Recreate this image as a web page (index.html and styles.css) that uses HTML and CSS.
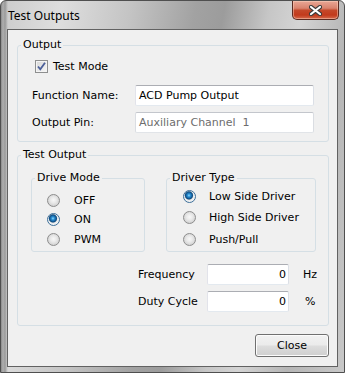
FILE: index.html
```html
<!DOCTYPE html>
<html lang="en">
<head>
    <meta charset="UTF-8">
    <title>Test Outputs</title>
<link rel="stylesheet" href="styles.css">
</head>
<body>
    <div class="window">
        <div class="titlebar">
            <span class="title">Test Outputs</span>
            <button class="close-x" aria-label="Close">
                <svg width="13" height="11" viewBox="0 0 13 11">
                    <path d="M2 2 L11 9 M11 2 L2 9" stroke="#3b3b3b" stroke-width="4.2" stroke-linecap="round"/>
                    <path d="M2 2 L11 9 M11 2 L2 9" stroke="#ffffff" stroke-width="2.2" stroke-linecap="round"/>
                </svg>
            </button>
        </div>

        <div class="client">
            <fieldset class="group output-group">
                <legend>Output</legend>
                <label class="check-row">
                    <span class="checkbox checked">
                        <svg width="11" height="11" viewBox="0 0 11 11">
                            <path d="M2 5.5 L4.3 8.3 L9 1.8" fill="none" stroke="#4b5f99" stroke-width="1.8"/>
                        </svg>
                    </span>
                    Test Mode
                </label>
                <div class="field-row">
                    <span class="field-label">Function Name:</span>
                    <div class="textbox">ACD Pump Output</div>
                </div>
                <div class="field-row pin-row">
                    <span class="field-label">Output Pin:</span>
                    <div class="textbox disabled">Auxiliary Channel  1</div>
                </div>
            </fieldset>

            <fieldset class="group test-group">
                <legend>Test Output</legend>
                <div class="subgroups">
                    <fieldset class="group drive-mode">
                        <legend>Drive Mode</legend>
                        <div class="radio-row"><span class="radio"></span>OFF</div>
                        <div class="radio-row"><span class="radio checked"></span>ON</div>
                        <div class="radio-row"><span class="radio"></span>PWM</div>
                    </fieldset>
                    <fieldset class="group driver-type">
                        <legend>Driver Type</legend>
                        <div class="radio-row"><span class="radio checked"></span>Low Side Driver</div>
                        <div class="radio-row"><span class="radio"></span>High Side Driver</div>
                        <div class="radio-row"><span class="radio"></span>Push/Pull</div>
                    </fieldset>
                </div>
                <div class="value-row">
                    <span class="value-label">Frequency</span>
                    <div class="textbox number">0</div>
                    <span class="unit">Hz</span>
                </div>
                <div class="value-row duty-row">
                    <span class="value-label">Duty Cycle</span>
                    <div class="textbox number">0</div>
                    <span class="unit percent">%</span>
                </div>
            </fieldset>

            <div class="buttons">
                <button class="btn">Close</button>
            </div>
        </div>
    </div>
</body>
</html>
```

FILE: styles.css
```css
:root {
    --face: #f0f0f0;
    --group-border: #d5dfe5;
    --text: #000;
}

* {
    box-sizing: border-box;
}

body {
    margin: 0;
    font-family: "DejaVu Sans", Tahoma, sans-serif;
    font-size: 11px;
    color: var(--text);
    background: #fff;
}

.window {
    width: 345px;
    height: 373px;
    border: 1px solid #4f4f4f;
    border-radius: 6px 6px 0 0;
    padding: 0 6px 5px 6px;
    background:
        linear-gradient(90deg, #8a8a8a 0, #b0b0b0 2px, #9a9a9a 4px, transparent 7px),
        linear-gradient(100deg, #cbcbcb 0%, #dedede 15%, #c4c4c4 32%, #a2a2a2 48%, #9c9c9c 55%, #c6c6c6 66%, #d4d4d4 74%, #b6b6b6 86%, #c8c8c8 100%);
    display: flex;
    flex-direction: column;
}

.titlebar {
    height: 28px;
    display: flex;
    align-items: flex-start;
    justify-content: space-between;
}

.title {
    font-family: "Noto Sans", "DejaVu Sans", sans-serif;
    font-size: 12px;
    line-height: 16px;
    padding: 7px 0 0 1px;
    color: #000;
}

.close-x {
    width: 47px;
    height: 19px;
    margin-right: -1px;
    border: 1px solid #5b2b22;
    border-top: none;
    border-radius: 0 0 5px 5px;
    background: linear-gradient(#e9a796 0%, #d9836e 40%, #c4482a 52%, #c23a1c 78%, #d56b4e 100%);
    box-shadow: inset 0 0 0 1px rgba(255, 220, 200, 0.45);
    padding: 0;
    display: flex;
    align-items: center;
    justify-content: center;
}

.client {
    flex: 1;
    background: var(--face);
    border: 1px solid #626262;
    display: flex;
    flex-direction: column;
}

.group {
    border: 1px solid var(--group-border);
    border-radius: 3px;
    margin: 0;
    padding: 0;
    min-width: 0;
}

.group > legend {
    padding: 0 2px;
    margin-left: 3px;
    line-height: 14px;
}

.output-group {
    margin: 8px 8px 0 9px;
    padding: 8px 0 8px 0;
}

.check-row {
    display: flex;
    align-items: center;
    height: 13px;
    padding-left: 17px;
    gap: 5px;
}

.checkbox {
    width: 13px;
    height: 13px;
    border: 1px solid #8e8f8f;
    background: linear-gradient(135deg, #d6d6d6, #f7f7f7);
    box-shadow: inset 0 0 0 1px #f4f4f4;
    display: flex;
    align-items: center;
    justify-content: center;
}

.field-row {
    display: flex;
    align-items: center;
    margin-top: 12px;
    padding-left: 14px;
}

.pin-row {
    margin-top: 6px;
}

.field-label {
    width: 103px;
}

.textbox {
    height: 21px;
    background: #fff;
    border: 1px solid;
    border-color: #abadb3 #dbdfe6 #e3e9ef #e2e3ea;
    border-radius: 2px;
    padding: 0 3px;
    line-height: 19px;
    white-space: pre;
}

.field-row .textbox {
    width: 179px;
}

.textbox.disabled {
    color: #6d6d6d;
    border-color: #c3c6cc #dadde2 #e1e4e8 #dadde2;
}

.test-group {
    margin: 6px 8px 0 9px;
    padding: 0 0 13px 0;
}

.subgroups {
    display: flex;
    margin-top: 9px;
    padding-left: 13px;
    gap: 21px;
}

.drive-mode {
    width: 114px;
    padding: 9px 0 5px 0;
}

.driver-type {
    width: 150px;
    padding: 5px 0 5px 0;
}

.radio-row {
    display: flex;
    align-items: center;
    height: 13px;
    margin-top: 6px;
}

.radio-row:first-of-type {
    margin-top: 0;
}

.drive-mode .radio-row {
    padding-left: 15px;
    gap: 14px;
}

.drive-mode .radio-row:last-child {
    margin-top: 7px;
}

.driver-type .radio-row {
    padding-left: 16px;
    gap: 13px;
    margin-top: 8px;
}

.driver-type .radio-row:first-of-type {
    margin-top: 0;
}

.driver-type .radio-row:last-child {
    margin-top: 9px;
}

.radio {
    width: 13px;
    height: 13px;
    border-radius: 50%;
    border: 1px solid #8d8d8d;
    background: radial-gradient(circle at 50% 45%, #f8f8f8 0, #e9e9e9 3px, #d3d3d3 6px);
    flex: none;
}

.radio.checked {
    border-color: #3c6f9a;
    background: radial-gradient(circle at 45% 40%, #8fdcff 0, #2a8fd4 1.5px, #0b4d86 3.5px, #5b7d99 4px, #e6eaee 4.6px, #f2f2f2 6px);
}

.value-row {
    display: flex;
    align-items: center;
    margin-top: 12px;
    padding-left: 120px;
}

.duty-row {
    margin-top: 6px;
}

.value-label {
    width: 69px;
}

.textbox.number {
    width: 82px;
    text-align: right;
    padding-right: 2px;
}

.unit {
    margin-left: 14px;
}

.unit.percent {
    margin-left: 16px;
}

.buttons {
    display: flex;
    justify-content: flex-end;
    margin: 8px 8px 0 0;
}

.btn {
    width: 74px;
    height: 23px;
    font-family: inherit;
    font-size: 11px;
    color: #000;
    border: 1px solid #707070;
    border-radius: 3px;
    background: linear-gradient(#f2f2f2 0%, #ebebeb 48%, #dddddd 52%, #cfcfcf 100%);
    box-shadow: inset 0 0 0 1px #fcfcfc;
    padding: 0;
}
```
